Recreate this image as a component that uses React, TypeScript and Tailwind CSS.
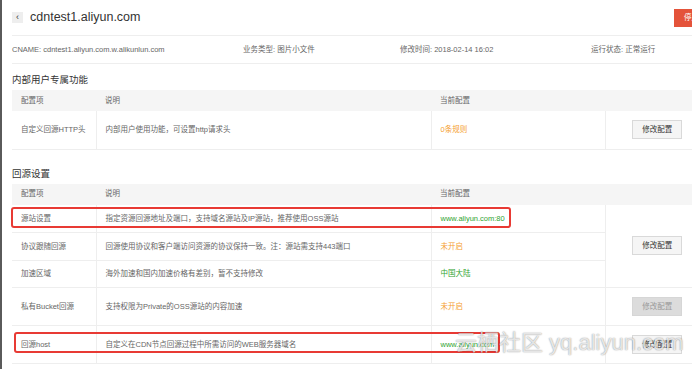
import React from "react";

const F = "font-['Liberation_Sans','Noto_Sans_CJK_SC',sans-serif]";

function Btn({ disabled }: { disabled?: boolean }) {
  return (
    <button
      className={
        disabled
          ? "w-[50px] h-[19px] bg-[#dcdcdc] border border-[#d6d6d6] text-[7.5px] text-[#999] leading-none"
          : "w-[50px] h-[19px] bg-[#f5f5f5] border border-[#d9d9d9] text-[7.5px] text-[#333] leading-none"
      }
    >
      修改配置
    </button>
  );
}

function HeadRow() {
  return (
    <tr className="bg-[#f5f5f5] h-[21px] text-[#666]">
      <th className="text-left font-normal pl-[9px]">配置项</th>
      <th className="text-left font-normal pl-[9px]">说明</th>
      <th className="text-left font-normal pl-[9px]">当前配置</th>
      <th></th>
    </tr>
  );
}

function Cols() {
  return (
    <colgroup>
      <col className="w-[84px]" />
      <col className="w-[335px]" />
      <col className="w-[174px]" />
      <col className="w-[104px]" />
    </colgroup>
  );
}

export default function App() {
  return (
    <div className={`relative w-[692px] h-[369px] overflow-hidden bg-white flex ${F}`}>
      <div className="w-[2px] shrink-0 bg-[#5a5a5a]" />
      <div className="w-[712px] shrink-0 pl-[10px] pr-[5px]">
        {/* header */}
        <div className="h-[36px] border-b border-[#eeeeee] flex items-center">
          <div className="w-[11px] h-[11px] bg-[#eeeeee] flex items-center justify-center text-[9px] text-[#333] leading-none">
            ‹
          </div>
          <div className="ml-[7px] text-[12.5px] text-[#333] leading-none">cdntest1.aliyun.com</div>
          <div className="ml-auto w-[35px] h-[18px] bg-[#e4533a] text-white text-[7.5px] flex items-center justify-center">
            停用
          </div>
        </div>
        {/* info row */}
        <div className="h-[28px] border-b border-[#eeeeee] flex items-center text-[7.5px] text-[#666]">
          <div className="w-[231px]">CNAME: cdntest1.aliyun.com.w.alikunlun.com</div>
          <div className="w-[157px]">业务类型: 图片小文件</div>
          <div className="w-[191px]">修改时间: 2018-02-14 16:02</div>
          <div>运行状态: 正常运行</div>
        </div>
        {/* section 1 */}
        <div className="h-[26px] flex items-end pb-[4px] text-[9.5px] leading-[12px] text-[#333]">内部用户专属功能</div>
        <table className="w-[697px] border-collapse table-fixed text-[7.5px] text-[#666]">
          <Cols />
          <thead>
            <HeadRow />
          </thead>
          <tbody>
            <tr className="h-[38px]">
              <td className="pl-[9px] border-b border-[#eeeeee]">自定义回源HTTP头</td>
              <td className="pl-[9px] border-b border-l border-[#eeeeee]">内部用户使用功能，可设置http请求头</td>
              <td className="pl-[9px] border-b border-l border-[#eeeeee] text-[#f5a030]">0条规则</td>
              <td className="border-b border-l border-[#eeeeee] text-center">
                <Btn />
              </td>
            </tr>
          </tbody>
        </table>
        {/* section 2 */}
        <div className="h-[34px] flex items-end pb-[4px] text-[9.5px] leading-[12px] text-[#333]">回源设置</div>
        <table className="w-[697px] border-collapse table-fixed text-[7.5px] text-[#666]">
          <Cols />
          <thead>
            <HeadRow />
          </thead>
          <tbody>
            <tr className="h-[28px]">
              <td className="pl-[9px] border-b border-[#eeeeee]">源站设置</td>
              <td className="pl-[9px] border-b border-l border-[#eeeeee]">指定资源回源地址及端口，支持域名源站及IP源站，推荐使用OSS源站</td>
              <td className="pl-[9px] border-b border-l border-[#eeeeee] text-[#2fa42f]">www.aliyun.com:80</td>
              <td rowSpan={3} className="border-b border-l border-[#eeeeee] text-center">
                <Btn />
              </td>
            </tr>
            <tr className="h-[28px]">
              <td className="pl-[9px] border-b border-[#eeeeee]">协议跟随回源</td>
              <td className="pl-[9px] border-b border-l border-[#eeeeee]">回源使用协议和客户端访问资源的协议保持一致。注：源站需支持443端口</td>
              <td className="pl-[9px] border-b border-l border-[#eeeeee] text-[#f5a030]">未开启</td>
            </tr>
            <tr className="h-[27px]">
              <td className="pl-[9px] border-b border-[#eeeeee]">加速区域</td>
              <td className="pl-[9px] border-b border-l border-[#eeeeee]">海外加速和国内加速价格有差别，暂不支持修改</td>
              <td className="pl-[9px] border-b border-l border-[#eeeeee] text-[#2fa42f]">中国大陆</td>
            </tr>
            <tr className="h-[38px]">
              <td className="pl-[9px] border-b border-[#eeeeee]">私有Bucket回源</td>
              <td className="pl-[9px] border-b border-l border-[#eeeeee]">支持权限为Private的OSS源站的内容加速</td>
              <td className="pl-[9px] border-b border-l border-[#eeeeee] text-[#f5a030]">未开启</td>
              <td className="border-b border-l border-[#eeeeee] text-center">
                <Btn disabled />
              </td>
            </tr>
            <tr className="h-[38px]">
              <td className="pl-[9px] border-b border-[#eeeeee]">回源host</td>
              <td className="pl-[9px] border-b border-l border-[#eeeeee]">自定义在CDN节点回源过程中所需访问的WEB服务器域名</td>
              <td className="pl-[9px] border-b border-l border-[#eeeeee] text-[#2fa42f]">www.aliyun.com</td>
              <td className="border-b border-l border-[#eeeeee] text-center">
                <Btn />
              </td>
            </tr>
          </tbody>
        </table>
      </div>

      {/* annotation boxes */}
      <div className="absolute left-[11px] top-[207px] w-[500px] h-[21px] border-2 border-[#e83a34] rounded-[3px]" />
      <div className="absolute left-[14px] top-[332px] w-[486px] h-[21px] border-2 border-[#e83a34] rounded-[3px]" />

      {/* watermark */}
      <div className="absolute left-[455px] top-[329px] text-[22px] leading-[28px] text-white/75 whitespace-nowrap [text-shadow:0_0_1px_rgba(0,0,0,0.35),0_0_2px_rgba(0,0,0,0.2)]">
        云栖社区 yq.aliyun.com
      </div>
    </div>
  );
}
